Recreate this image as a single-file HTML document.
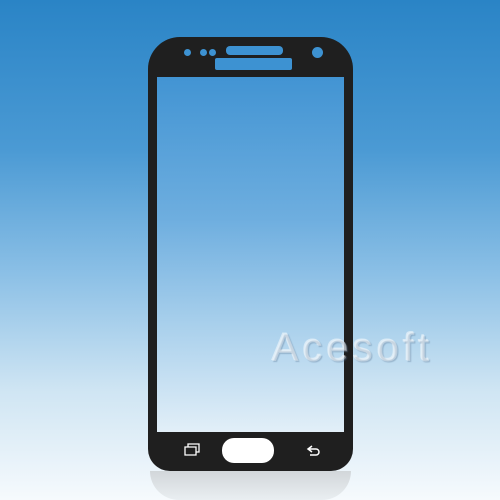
<!DOCTYPE html><html><head><style>
body{margin:0;width:500px;height:500px;overflow:hidden;background:linear-gradient(#2a84c6 0%,#4b9ad4 30%,#8cc0e6 55%,#cfe5f3 78%,#f6fafd 100%);position:relative;font-family:"Liberation Sans",sans-serif}
.p{position:absolute;left:148px;top:37px;width:205px;height:434px;background:#1f1f1f;border-radius:32px 32px 22px 22px}
.s{position:absolute;left:157px;top:77px;width:187px;height:355px;background:linear-gradient(#4294d3 0%,#6eaedf 40%,#a9d0ec 70%,#e2eff8 100%)}
.r{position:absolute;left:150px;top:471px;width:201px;height:29px;background:linear-gradient(#cfd3d6,#e8edf0);border-radius:0 0 30px 30px;opacity:.9}
.b{position:absolute;background:#3d92d2}
.w{position:absolute;left:272px;top:326px;font-size:40px;color:rgba(255,255,255,.35);letter-spacing:4px;text-shadow:1px 1px 1px rgba(80,110,140,.35),-1px -1px 0 rgba(255,255,255,.5)}
</style></head><body>
<div class="r"></div>
<div class="p"></div>
<div class="s"></div>
<div class="b" style="left:184px;top:49px;width:7px;height:7px;border-radius:50%"></div>
<div class="b" style="left:200px;top:49px;width:7px;height:7px;border-radius:50%"></div>
<div class="b" style="left:209px;top:49px;width:7px;height:7px;border-radius:50%"></div>
<div class="b" style="left:226px;top:46px;width:57px;height:9px;border-radius:4px"></div>
<div class="b" style="left:215px;top:58px;width:77px;height:12px;border-radius:2px"></div>
<div class="b" style="left:312px;top:47px;width:11px;height:11px;border-radius:50%"></div>
<div style="position:absolute;left:222px;top:438px;width:52px;height:25px;background:#fff;border-radius:12px"></div>
<svg style="position:absolute;left:182px;top:442px" width="20" height="16"><path d="M3 5h11v8H3z M6 5V2h11v8h-3" fill="none" stroke="#fff" stroke-width="1.3"/></svg>
<svg style="position:absolute;left:305px;top:444px" width="20" height="16"><path d="M7 2L3 5l4 3 M3 5h8a3 3 0 0 1 0 6H5" fill="none" stroke="#fff" stroke-width="1.5"/></svg>
<div class="w">Acesoft</div>
</body></html>
